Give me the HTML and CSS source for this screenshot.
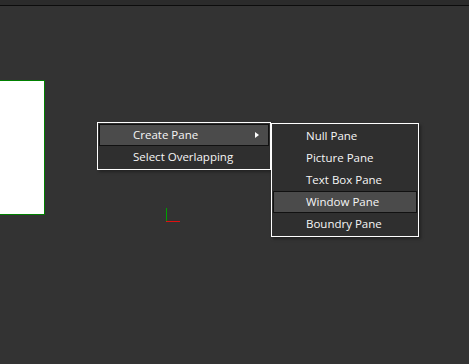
FILE: index.html
```html
<!DOCTYPE html>
<html lang="en">
<head>
    <meta charset="UTF-8">
    <title>Layout Editor</title>
    <link rel="stylesheet" href="styles.css">
</head>
<body>
    <div class="toolbar"></div>

    <div class="canvas">
        <div class="pane"></div>

        <div class="origin">
            <span class="axis-y"></span>
            <span class="axis-x"></span>
        </div>

        <ul class="menu context-menu">
            <li class="menu-item active has-sub">Create Pane<span class="sub-arrow"></span></li>
            <li class="menu-item">Select Overlapping</li>
        </ul>

        <ul class="menu sub-menu">
            <li class="menu-item">Null Pane</li>
            <li class="menu-item">Picture Pane</li>
            <li class="menu-item">Text Box Pane</li>
            <li class="menu-item active">Window Pane</li>
            <li class="menu-item">Boundry Pane</li>
        </ul>
    </div>
</body>
</html>
```
FILE: styles.css
```css
:root {
    --bg: #333333;
    --bar: #2b2b2b;
    --menu-bg: #2f2f2f;
    --item-hover: #4b4b4b;
    --text: #f6f6f6;
}

* {
    margin: 0;
    padding: 0;
    box-sizing: border-box;
}

html, body {
    height: 100%;
}

body {
    background: var(--bg);
    font-family: 'Open Sans', 'Noto Sans', sans-serif;
    font-size: 11.5px;
    color: var(--text);
    display: flex;
    flex-direction: column;
    overflow: hidden;
}

.toolbar {
    height: 6px;
    background: var(--bar);
    border-bottom: 1px solid #0c0c0c;
}

.canvas {
    position: relative;
    flex-grow: 1;
}

/* canvas items (page y minus 6) */
.pane {
    position: absolute;
    left: -10px;
    top: 74px;
    width: 55px;
    height: 135px;
    background: #ffffff;
    border: 1px solid #008000;
}

.origin {
    position: absolute;
    left: 166px;
    top: 202px;
    width: 14px;
    height: 14px;
}

.axis-y {
    position: absolute;
    left: 0;
    top: 0;
    width: 1px;
    height: 14px;
    background: #00a000;
}

.axis-x {
    position: absolute;
    left: 0;
    bottom: 0;
    width: 14px;
    height: 1px;
    background: #e01010;
}

.menu {
    position: absolute;
    list-style: none;
    background: var(--menu-bg);
    border: 1px solid #ffffff;
    padding: 1px;
    box-shadow: 2px 2px 3px rgba(0, 0, 0, 0.35);
}

.context-menu {
    left: 97px;
    top: 116px;
    width: 174px;
}

.sub-menu {
    left: 271px;
    top: 117px;
    width: 148px;
}

.menu-item {
    position: relative;
    height: 22px;
    line-height: 20px;
    padding-left: 33px;
    border: 1px solid transparent;
    white-space: nowrap;
}

.sub-menu .menu-item {
    padding-left: 32px;
}

.menu-item.active {
    background: var(--item-hover);
    border-color: #111111;
}

.sub-arrow {
    position: absolute;
    right: 9px;
    top: 7px;
    width: 0;
    height: 0;
    border-left: 4px solid #ffffff;
    border-top: 3px solid transparent;
    border-bottom: 3px solid transparent;
}
```
